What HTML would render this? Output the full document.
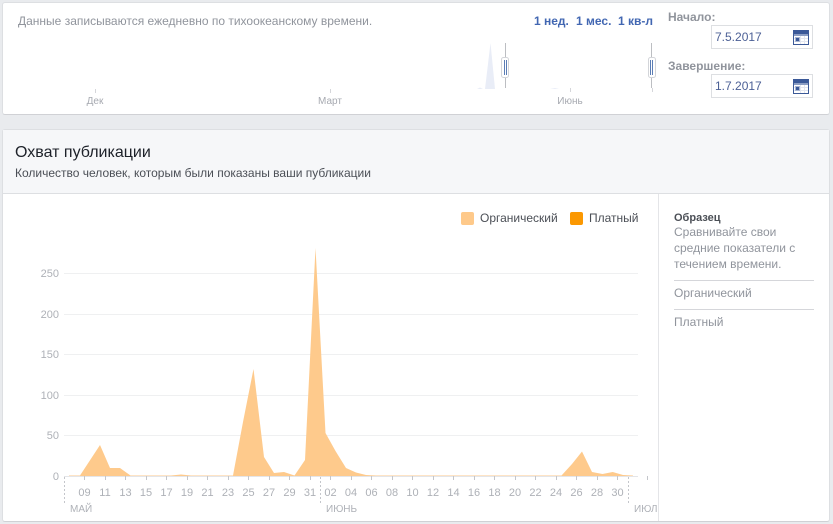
<!DOCTYPE html>
<html><head><meta charset="utf-8"><style>
html,body{margin:0;padding:0}
body{width:833px;height:524px;background:#e9ebee;position:relative;overflow:hidden;font-family:"Liberation Sans",sans-serif;font-size:12px}
.a{position:absolute;white-space:nowrap}
.box{position:absolute;background:#fff;border:1px solid #dddfe2;border-bottom-color:#d0d1d5;border-radius:3px;box-sizing:border-box}
.inp{position:absolute;left:711px;width:102px;height:24px;box-sizing:border-box;border:1px solid #dddfe2;background:#fff;color:#4b5f95;font-size:12px;line-height:22px;padding-left:3px}
svg{position:absolute;left:0;top:0}
svg text{font-family:"Liberation Sans",sans-serif}
</style></head><body>
<div class="box" style="left:2px;top:2px;width:828px;height:113px"></div>
<div class="a" style="left:18px;top:14px;color:#90949c">Данные записываются ежедневно по тихоокеанскому времени.</div>
<div class="a" style="left:534px;top:14px;color:#4267b2;font-weight:bold">1 нед.</div>
<div class="a" style="left:576px;top:14px;color:#4267b2;font-weight:bold">1 мес.</div>
<div class="a" style="left:618px;top:14px;color:#4267b2;font-weight:bold">1 кв-л</div>
<div class="a" style="left:668px;top:10px;color:#90949c;font-weight:bold">Начало:</div>
<div class="a" style="left:668px;top:59px;color:#90949c;font-weight:bold">Завершение:</div>
<div class="inp" style="top:25px">7.5.2017</div>
<div class="inp" style="top:74px">1.7.2017</div>

<div class="box" style="left:2px;top:129px;width:828px;height:393px"></div>
<div class="a" style="left:3px;top:130px;width:826px;height:63px;background:#f6f7f9;border-bottom:1px solid #dddfe2"></div>
<div class="a" style="left:15px;top:144px;font-size:16px;color:#1d2129">Охват публикации</div>
<div class="a" style="left:15px;top:166px;color:#4b4f56">Количество человек, которым были показаны ваши публикации</div>
<div class="a" style="left:658px;top:194px;width:1px;height:327px;background:#e4e5e8"></div>

<div class="a" style="left:461px;top:212px;width:13px;height:13px;background:#fec98a;border-radius:2px"></div>
<div class="a" style="left:480px;top:211px;color:#4b4f56">Органический</div>
<div class="a" style="left:570px;top:212px;width:13px;height:13px;background:#fb9802;border-radius:2px"></div>
<div class="a" style="left:589px;top:211px;color:#4b4f56">Платный</div>

<div class="a" style="left:674px;top:211px;color:#4b4f56;font-weight:bold;font-size:11px;line-height:14px">Образец</div>
<div class="a" style="left:674px;top:224px;color:#90949c;line-height:16px">Сравнивайте свои<br>средние показатели с<br>течением времени.</div>
<div class="a" style="left:674px;top:280px;width:140px;height:1px;background:#d5d6da"></div>
<div class="a" style="left:674px;top:286px;color:#90949c">Органический</div>
<div class="a" style="left:674px;top:309px;width:140px;height:1px;background:#d5d6da"></div>
<div class="a" style="left:674px;top:315px;color:#90949c">Платный</div>

<svg width="833" height="524" viewBox="0 0 833 524">
<!-- calendars -->
<g transform="translate(793,30)">
<rect x=".5" y=".5" width="15" height="14" fill="#fff" stroke="#3b5998"/>
<rect x="0" y="0" width="16" height="4" fill="#3b5998"/>
<rect x="1" y="4" width="14" height="2" fill="#8b9dc3"/>
<path d="M7.500 6V14M11.500 6V14M1 8.500H15M1 11.500H15" stroke="#e4e7f0"/>
<rect x="2" y="7" width="5" height="5" fill="#a9b6d3"/>
<rect x="3" y="8" width="3" height="3" fill="#3b5998"/>
</g>
<g transform="translate(793,79)">
<rect x=".5" y=".5" width="15" height="14" fill="#fff" stroke="#3b5998"/>
<rect x="0" y="0" width="16" height="4" fill="#3b5998"/>
<rect x="1" y="4" width="14" height="2" fill="#8b9dc3"/>
<path d="M7.500 6V14M11.500 6V14M1 8.500H15M1 11.500H15" stroke="#e4e7f0"/>
<rect x="2" y="7" width="5" height="5" fill="#a9b6d3"/>
<rect x="3" y="8" width="3" height="3" fill="#3b5998"/>
</g>
<!-- overview -->
<path d="M477 89L480 87.500L483 89ZM485 89L490.500 43L495 89ZM550 89L555 88L559 89Z" fill="#e9edf7"/>
<path d="M95.500 89V93M330.500 89V93M570.500 88V92M652.500 88V92" stroke="#d5d6da"/>
<path d="M505.500 43V88M651.500 43V88" stroke="#bcbec2"/>
<rect x="501.500" y="57.500" width="7" height="20" rx="2" fill="#fff" stroke="#d3d5d9"/>
<rect x="648.500" y="57.500" width="7" height="20" rx="2" fill="#fff" stroke="#d3d5d9"/>
<path d="M504.500 60V75M506.500 60V75M650.500 60V75M652.500 60V75" stroke="#5b7db5"/>
<g font-size="10" fill="#a6a9b0" text-anchor="middle">
<text x="95" y="104">Дек</text><text x="330" y="104">Март</text><text x="570" y="104">Июнь</text>
</g>
<!-- grid -->
<path d="M64 435.500H638M64 395.500H638M64 354.500H638M64 314.500H638M64 273.500H638" stroke="#eff0f1"/>
<path d="M64 476.500H638" stroke="#e4e5e8"/>
<g font-size="11" fill="#aeb1b7" text-anchor="end">
<text x="59" y="480">0</text><text x="59" y="439">50</text><text x="59" y="399">100</text><text x="59" y="358">150</text><text x="59" y="318">200</text><text x="59" y="277">250</text>
</g>
<!-- area -->
<path fill="#fec887" fill-opacity=".96" d="M69 476L69 475.500L80 475.500L100 445L110 468L120 468L130.500 475.500L171 475.500L181 474.500L191 475.500L233 475.500L243 422L253.500 369L264 457L274 473L284 472L294.500 475.500L305 460L315.500 248L325.500 433L335.500 451L346 468L356 472.500L366 475L376 475.500L561.500 475.500L572 464L582 451.500L592 472L602.500 474L612.700 472L623 475L633 475.500L633 476Z"/>
<!-- ticks -->
<path stroke="#c4c6cb" d="M84.500 476V480M105.500 476V480M125.500 476V480M146.500 476V480M166.500 476V480M187.500 476V480M207.500 476V480M228.500 476V480M248.500 476V480M269.500 476V480M289.500 476V480M310.500 476V480M330.500 476V480M351.500 476V480M371.500 476V480M392.500 476V480M412.500 476V480M433.500 476V480M453.500 476V480M474.500 476V480M494.500 476V480M515.500 476V480M535.500 476V480M556.500 476V480M576.500 476V480M597.500 476V480M617.500 476V480M647.500 476V480"/>
<path stroke="#c4c6cb" stroke-dasharray="2 2" d="M64.500 477V504M320.500 477V504M628.500 477V504"/>
<g font-size="11" fill="#aeb1b7" text-anchor="middle">
<text x="84.500" y="496">09</text><text x="105" y="496">11</text><text x="125.500" y="496">13</text><text x="146" y="496">15</text><text x="166.500" y="496">17</text><text x="187" y="496">19</text><text x="207.500" y="496">21</text><text x="228" y="496">23</text><text x="248.500" y="496">25</text><text x="269" y="496">27</text><text x="289.500" y="496">29</text><text x="310" y="496">31</text><text x="330.500" y="496">02</text><text x="351" y="496">04</text><text x="371.500" y="496">06</text><text x="392" y="496">08</text><text x="412.500" y="496">10</text><text x="433" y="496">12</text><text x="453.500" y="496">14</text><text x="474" y="496">16</text><text x="494.500" y="496">18</text><text x="515" y="496">20</text><text x="535.500" y="496">22</text><text x="556" y="496">24</text><text x="576.500" y="496">26</text><text x="597" y="496">28</text><text x="617.500" y="496">30</text>
</g>
<g font-size="10" fill="#aeb1b7">
<text x="70" y="512">МАЙ</text><text x="326" y="512">ИЮНЬ</text><text x="634" y="512">ИЮЛ</text>
</g>
</svg>
</body></html>
